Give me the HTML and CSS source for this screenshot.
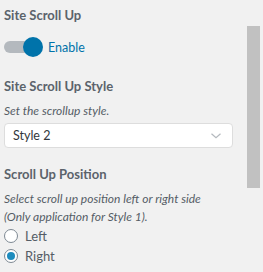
FILE: index.html
```html
<!DOCTYPE html>
<html>
<head>
<meta charset="utf-8">
<link rel="stylesheet" href="styles.css">
</head>
<body>
<div class="panel">
  <div class="content">
    <div class="control">
      <div class="title">Site Scroll Up</div>
      <label class="toggle-row">
        <span class="toggle"><span class="knob"></span></span>
        <span class="toggle-label">Enable</span>
      </label>
    </div>
    <div class="control">
      <div class="title">Site Scroll Up Style</div>
      <div class="desc">Set the scrollup style.</div>
      <div class="select">
        <span>Style 2</span>
        <svg class="chev" width="10" height="6" viewBox="0 0 10 6"><path d="M0.5 0.8l4.5 4 4.5-4" fill="none" stroke="#b4b9be" stroke-width="1.2"/></svg>
      </div>
    </div>
    <div class="control">
      <div class="title">Scroll Up Position</div>
      <div class="desc">Select scroll up position left or right side<br>(Only application for Style 1).</div>
      <div class="radios">
        <label class="radio-row"><span class="radio"></span><span>Left</span></label>
        <label class="radio-row"><span class="radio checked"></span><span>Right</span></label>
      </div>
    </div>
  </div>
  <div class="scrollbar"><div class="thumb"></div></div>
</div>
</body>
</html>
```
FILE: styles.css
```css
html, body {
  margin: 0;
  padding: 0;
  background: #f1f1f1;
}
body {
  font-family: Lato, "Noto Sans", sans-serif;
  color: #555d66;
}
.panel {
  display: flex;
  width: 263px;
  height: 272px;
  overflow: hidden;
}
.content {
  width: 245px;
  padding: 6px 12px 0 4px;
  box-sizing: border-box;
}
.control {
  margin-bottom: 17px;
}
.title {
  font-size: 13px;
  font-weight: 700;
  line-height: 18px;
  color: #5b636b;
}
.toggle-row {
  display: flex;
  align-items: center;
  height: 20px;
  margin-top: 13px;
  margin-bottom: 20px;
}
.toggle {
  position: relative;
  width: 40px;
  height: 20px;
}
.toggle::before {
  content: "";
  position: absolute;
  left: 0;
  top: 4px;
  width: 30px;
  height: 12px;
  border-radius: 6px;
  background: #b4b9be;
}
.knob {
  position: absolute;
  left: 19px;
  top: 0;
  width: 20px;
  height: 20px;
  border-radius: 50%;
  background: #0073aa;
}
.toggle-label {
  margin-left: 4px;
  font-size: 12.5px;
  color: #0073aa;
}
.desc {
  font-size: 12px;
  font-style: italic;
  line-height: 18px;
  margin-top: 7px;
}
.select {
  margin-top: 3px;
  height: 25px;
  box-sizing: border-box;
  width: 229px;
  border: 1px solid #ddd;
  border-radius: 4px;
  background: #fff;
  display: flex;
  align-items: center;
  justify-content: space-between;
  padding: 0 11px 0 8px;
  font-size: 12.5px;
  color: #32373c;
}
.radios {
  margin-top: 0;
}
.radio-row {
  display: flex;
  align-items: center;
  height: 20px;
  font-size: 13px;
  color: #555d66;
}
.radio {
  width: 14px;
  height: 14px;
  box-sizing: border-box;
  border: 1px solid #7e8993;
  border-radius: 50%;
  background: #fff;
  margin-right: 7px;
  display: flex;
  align-items: center;
  justify-content: center;
}
.radio.checked::after {
  content: "";
  width: 8px;
  height: 8px;
  border-radius: 50%;
  background: #1e8cbe;
}
.scrollbar {
  width: 18px;
  padding-top: 26px;
  box-sizing: border-box;
  background: #f1f1f1;
}
.thumb {
  width: 13px;
  height: 162px;
  margin-left: 2px;
  background: #c1c1c1;
}
```
